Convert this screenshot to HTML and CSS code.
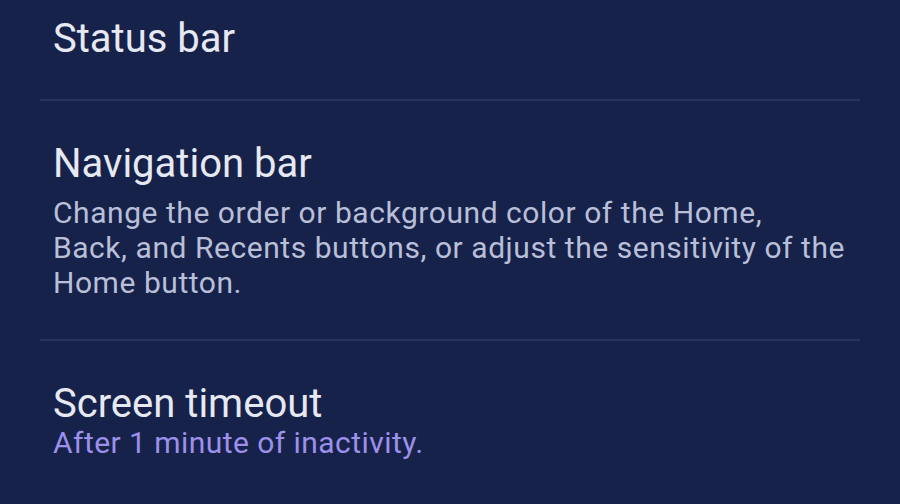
FILE: index.html
```html
<!DOCTYPE html>
<html lang="en">

<head>
    <meta charset="UTF-8">
    <title>Display</title>
    <link rel="stylesheet" href="styles.css">
</head>

<body>
    <div class="settings-list">
        <!-- Status bar -->
        <div class="settings-item first">
            <div class="item-title">Status bar</div>
        </div>

        <!-- Navigation bar -->
        <div class="settings-item">
            <div class="item-title">Navigation bar</div>
            <div class="item-desc">Change the order or background color of the Home,<br>Back, and Recents buttons, or adjust the sensitivity of the Home button.</div>
        </div>

        <!-- Screen timeout -->
        <div class="settings-item">
            <div class="item-title">Screen timeout</div>
            <div class="item-value">After 1 minute of inactivity.</div>
        </div>
    </div>
</body>

</html>
```

FILE: styles.css
```css
body {
    margin: 0;
    background-color: #16224a;
    font-family: Roboto, "Noto Sans", sans-serif;
    height: 504px;
    overflow: hidden;
}

.settings-list {
    padding: 0 40px;
}

.settings-item {
    padding: 39px 4px 39px 13px;
    border-bottom: 2px solid #27335a;
}

.settings-item.first {
    padding-top: 15px;
    padding-bottom: 36px;
}

.settings-item:last-child {
    border-bottom: none;
}

.item-title {
    font-size: 40px;
    line-height: 48px;
    color: #e6e9f2;
}

.item-desc {
    margin-top: 7px;
    font-size: 30px;
    line-height: 35px;
    letter-spacing: 0.55px;
    color: #b9bfd8;
}

.item-value {
    margin-top: -3px;
    font-size: 30px;
    line-height: 35px;
    letter-spacing: 0.45px;
    color: #9c90ea;
}
```
